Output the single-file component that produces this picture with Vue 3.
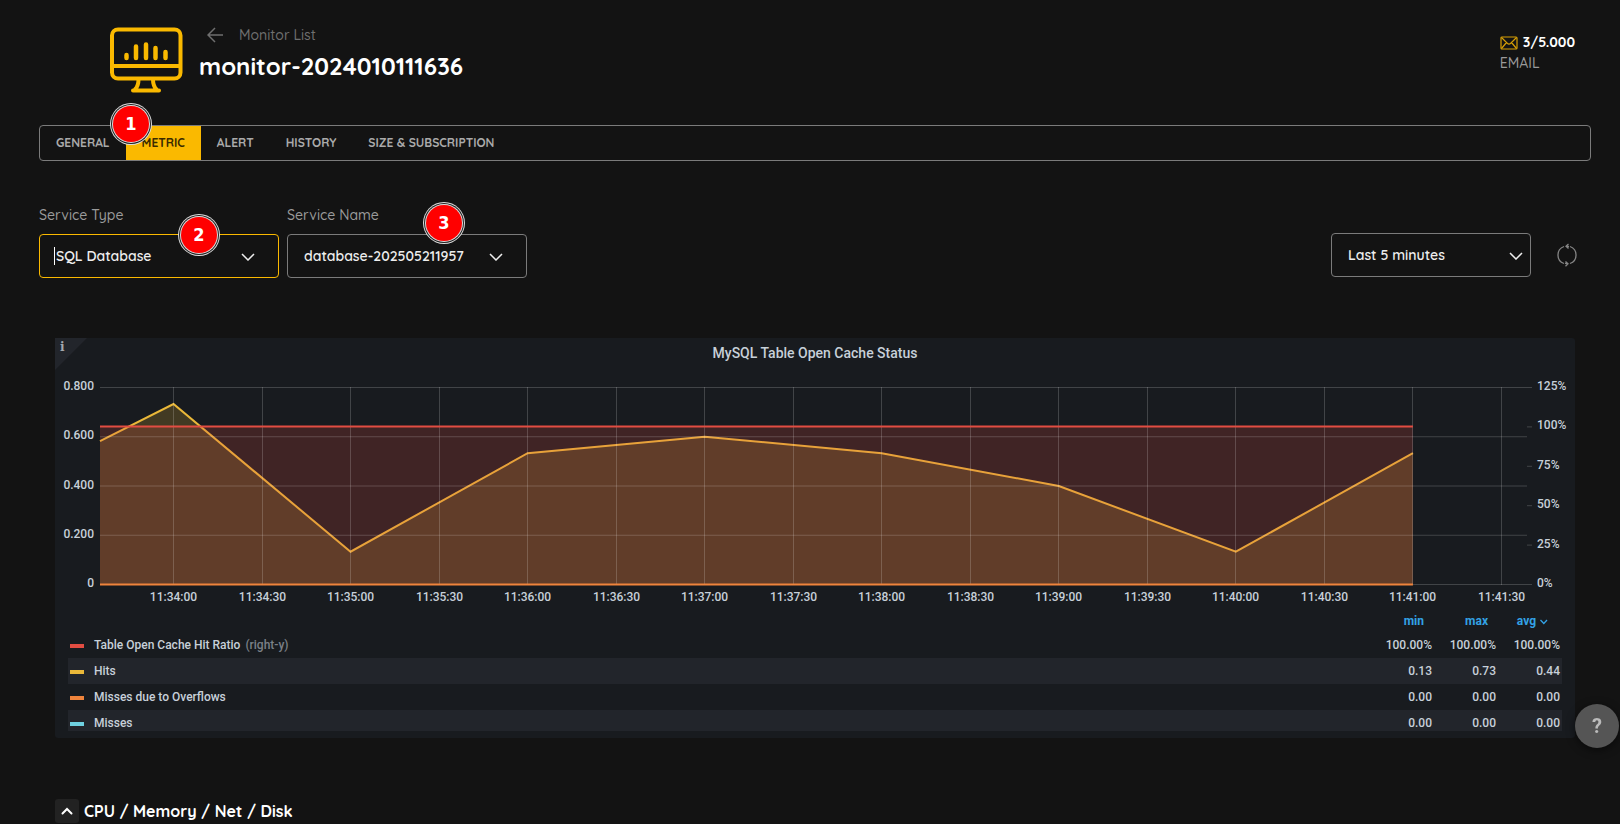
<script setup>
import { ref } from 'vue'

const tabs = ['GENERAL', 'METRIC', 'ALERT', 'HISTORY', 'SIZE & SUBSCRIPTION']
const active = ref('METRIC')

const W = 1432
const H = 198
const plotRight = 1427
const step = 88.53
const firstTick = 73.5

const times = []
for (let i = 0; i < 16; i++) {
  const s = 34 * 60 + i * 30
  const x = Math.floor(firstTick + i * step) + 0.5
  times.push({
    x,
    left: (x / W) * 100 + '%',
    label: `11:${Math.floor(s / 60)}:${s % 60 === 0 ? '00' : '30'}`,
  })
}

const y = (v) => 0.5 + (1 - v / 0.8) * 197
const leftTicks = [0.8, 0.6, 0.4, 0.2, 0]
const leftLabels = ['0.800', '0.600', '0.400', '0.200', '0']
const rightLabels = ['125%', '100%', '75%', '50%', '25%', '0%']
const rightTicks = rightLabels.map((_, i) => 0.5 + (i * 197) / 5)

const minute = (i) => firstTick + i * step * 2
const hits = [
  [0, 0.582],
  [minute(0), 0.733],
  [minute(1), 0.133],
  [minute(2), 0.533],
  [minute(3), 0.6],
  [minute(4), 0.533],
  [minute(5), 0.4],
  [minute(6), 0.133],
  [minute(7), 0.533],
]
const end = minute(7)
const hitsLine = hits.map(([x, v]) => `${x},${y(v)}`).join(' ')
const hitsArea = `0,${y(0)} ${hitsLine} ${end},${y(0)}`
const ratioY = 197 / 5

const series = [
  { name: 'Table Open Cache Hit Ratio', axis: '(right-y)', color: 'red', min: '100.00%', max: '100.00%', avg: '100.00%' },
  { name: 'Hits', color: 'yellow', min: '0.13', max: '0.73', avg: '0.44' },
  { name: 'Misses due to Overflows', color: 'orange', min: '0.00', max: '0.00', avg: '0.00' },
  { name: 'Misses', color: 'cyan', min: '0.00', max: '0.00', avg: '0.00' },
]
</script>

<template>
  <div class="page">
    <header class="header">
      <svg class="logo" width="73" height="68" viewBox="0 0 73 68" fill="none" stroke="#fab900" stroke-width="4" stroke-linecap="round" stroke-linejoin="round" aria-hidden="true">
        <rect x="2" y="2.5" width="68.5" height="49" rx="6" />
        <path d="M3 39H70" />
        <path d="M28.500 52.500Q28.500 59 25 62.500M43 52.500Q43 59 46.500 62.500M23 63.500H49" />
        <path d="M16.500 28V31M26 19.500V31M36 17.500V31M45.500 21V31M55.500 25V31" stroke-width="4.5" />
      </svg>
      <div class="heading">
        <a class="back" href="#">
          <svg width="17" height="16" viewBox="0 0 17 16" fill="none" stroke="currentColor" stroke-width="1.500" aria-hidden="true"><path d="M16 8H1.500M8 1L1 8L8 15" /></svg>
          Monitor List
        </a>
        <h1>monitor-2024010111636</h1>
      </div>
      <div class="quota">
        <div class="count">
          <svg width="18" height="14" viewBox="0 0 18 14" fill="none" stroke="#d79f06" stroke-width="1.200" aria-hidden="true"><rect x="1" y="1" width="16" height="12" rx="1" /><path d="M1.500 1.500L7.500 7.500Q9 8.600 10.500 7.500L16.500 1.500M1.500 12.500L6.500 6.500M16.500 12.500L11.500 6.500" /></svg>
          3/5.000
        </div>
        <div class="kind">EMAIL</div>
      </div>
    </header>

    <nav class="tabs">
      <button v-for="t in tabs" :key="t" type="button" :class="{ active: t === active }" @click="active = t">{{ t }}</button>
      <span class="badge one">1</span>
    </nav>

    <section class="filters">
      <div class="field">
        <label for="type">Service Type</label>
        <div class="control focused">
          <select id="type"><option>SQL Database</option></select>
          <span class="caret"></span>
          <svg class="chev" width="14" height="8" viewBox="0 0 14 8"><path d="M1 1L7 7L13 1" /></svg>
        </div>
        <span class="badge two">2</span>
      </div>
      <div class="field">
        <label for="name">Service Name</label>
        <div class="control">
          <select id="name"><option>database-202505211957</option></select>
          <svg class="chev" width="14" height="8" viewBox="0 0 14 8"><path d="M1 1L7 7L13 1" /></svg>
        </div>
        <span class="badge three">3</span>
      </div>
      <div class="range">
        <div class="control">
          <select id="range" aria-label="Time range"><option>Last 5 minutes</option></select>
          <svg class="chev" width="14" height="8" viewBox="0 0 14 8"><path d="M1 1L7 7L13 1" /></svg>
        </div>
        <button class="refresh" type="button" aria-label="Refresh">
          <svg width="20" height="24" viewBox="0 0 20 24" fill="none" stroke="#858585" stroke-width="1.300"><path d="M7 3.500A9 9 0 0 0 7 20.500M8 20.300L11 20.800M13 20.500A9 9 0 0 0 13 3.500M12 3.500L9 3.200M11.500 1L9 3.200L11.500 5.500M8.500 18.500L11 20.800L8.500 23.200" /></svg>
        </button>
      </div>
    </section>

    <section class="panel">
      <span class="corner"></span><span class="info">i</span>
      <h2>MySQL Table Open Cache Status</h2>
      <div class="chart">
        <div class="axis left"><span v-for="l in leftLabels" :key="l">{{ l }}</span></div>
        <svg class="plot" :viewBox="`0 0 ${W} ${H}`" preserveAspectRatio="none" aria-hidden="true">
          <polygon :points="hitsArea" fill="#eab839" fill-opacity=".2" />
          <polyline :points="hitsLine" class="line" stroke="#eab839" />
          <rect x="0" :y="ratioY" :width="end" :height="y(0) - ratioY" fill="#e24d42" fill-opacity=".2" />
          <g class="grid">
            <line v-for="v in leftTicks" :key="v" x1="0" :x2="plotRight" :y1="y(v)" :y2="y(v)" />
            <line v-for="t in times" :key="t.x" :x1="t.x" :x2="t.x" y1="0" :y2="H" />
            <line v-for="r in rightTicks" :key="r" :x1="plotRight" :x2="W" :y1="r" :y2="r" />
          </g>
          <line x1="0" :x2="end" :y1="ratioY" :y2="ratioY" class="line" stroke="#e24d42" />
          <line x1="0" :x2="end" :y1="y(0)" :y2="y(0)" class="line" stroke="#ef843c" />
        </svg>
        <div class="axis right"><span v-for="l in rightLabels" :key="l">{{ l }}</span></div>
        <div class="times"><span v-for="t in times" :key="t.label" :style="{ left: t.left }">{{ t.label }}</span></div>
      </div>
      <table class="legend">
        <thead>
          <tr>
            <th></th>
            <th>min</th>
            <th>max</th>
            <th>avg <svg width="9" height="6" viewBox="0 0 9 6" fill="none" stroke="#33a2e5" stroke-width="1.300"><path d="M1.500 1L4.800 4.500L8 1" /></svg></th>
          </tr>
        </thead>
        <tbody>
          <tr v-for="s in series" :key="s.name">
            <td><i :class="['swatch', s.color]"></i>{{ s.name }}<span v-if="s.axis" class="note">{{ s.axis }}</span></td>
            <td>{{ s.min }}</td>
            <td>{{ s.max }}</td>
            <td>{{ s.avg }}</td>
          </tr>
        </tbody>
      </table>
    </section>

    <section class="group">
      <button type="button" aria-label="Collapse section">
        <svg width="12" height="8" viewBox="0 0 12 8" fill="none" stroke="#fff" stroke-width="2" stroke-linecap="round"><path d="M1.500 6.500L6 2L10.500 6.500" /></svg>
      </button>
      <h3>CPU / Memory / Net / Disk</h3>
    </section>

    <button class="help" type="button" aria-label="Help">?</button>
  </div>
</template>

<style>
body {
  background: #131313;
}
</style>

<style scoped>
.page {
  box-sizing: border-box;
  min-height: 100vh;
  padding: 27px 29px 0 39px;
  background: #131313;
  color: #fff;
  font-family: Quicksand, Lato, sans-serif;
  font-size: 14px;
  font-weight: 500;
}
.page * {
  box-sizing: border-box;
}
button,
select {
  font: inherit;
  color: inherit;
  margin: 0;
  padding: 0;
  border: 0;
  background: none;
  cursor: pointer;
}
svg {
  flex: none;
}
h1,
h2,
h3 {
  margin: 0;
}
.header {
  display: flex;
  height: 98px;
  padding: 0 16px 0 71px;
}
.heading {
  padding-left: 16px;
}
.back {
  display: flex;
  align-items: center;
  gap: 15px;
  height: 16px;
  padding-left: 8px;
  color: #6f6f6f;
  text-decoration: none;
}
h1 {
  margin-top: 8px;
  font-size: 24px;
  line-height: 30px;
  font-weight: 700;
}
.quota {
  margin: 5px 0 0 auto;
  line-height: 21px;
}
.count {
  display: flex;
  align-items: center;
  gap: 5px;
  font-weight: 700;
}
.kind {
  color: #9a9a9a;
}
.tabs {
  position: relative;
  display: flex;
  height: 36px;
  border: 1px solid #7b7b7b;
  border-radius: 4px;
}
.tabs button {
  padding: 0 16px 2px;
  font-size: 12px;
  font-weight: 700;
  color: #aaa;
}
.tabs .active {
  background: #fab900;
  color: #3a2b00;
}
.badge {
  position: absolute;
  width: 36px;
  height: 36px;
  border-radius: 50%;
  background: #f00;
  box-shadow: 0 0 0 1px #ddd, 0 0 0 2px #222, 0 0 0 3px #ddd;
  font: 700 18px/36px "DejaVu Sans Condensed", "DejaVu Sans", sans-serif;
  text-align: center;
}
.one {
  left: 73px;
  top: -20px;
}
.two {
  left: 142px;
  top: 11px;
}
.three {
  left: 139px;
  top: -1px;
}
.filters {
  display: flex;
  align-items: flex-end;
  gap: 8px;
  margin-top: 45px;
}
.field {
  position: relative;
  width: 240px;
}
.field label {
  display: block;
  margin-bottom: 10px;
  line-height: 18px;
  color: #9a9a9a;
}
.control {
  position: relative;
}
.control select {
  display: block;
  width: 100%;
  height: 44px;
  padding: 0 16px;
  appearance: none;
  outline: 0;
  border: 1px solid #7b7b7b;
  border-radius: 4px;
  color: #eee;
  font-weight: 600;
}
.control option {
  background: #131313;
}
.control.focused select {
  border-color: #fab900;
}
.caret {
  position: absolute;
  left: 15px;
  top: 13px;
  width: 1px;
  height: 18px;
  background: #fff;
}
.chev {
  position: absolute;
  right: 24px;
  top: 19px;
  fill: none;
  stroke: #eee;
  stroke-width: 1.5;
  pointer-events: none;
}
.range {
  display: flex;
  align-items: center;
  gap: 26px;
  margin: 0 14px 1px auto;
}
.range .control {
  width: 200px;
}
.range .chev {
  right: 8px;
}
.refresh {
  display: flex;
}
.panel {
  position: relative;
  margin: 60px 16px 0;
  padding-bottom: 7px;
  border-radius: 3px;
  background: #181b1f;
  color: #c7d0d9;
  font: 500 12px/16px Roboto, sans-serif;
}
.corner {
  position: absolute;
  left: 0;
  top: 0;
  width: 32px;
  height: 32px;
  background: #22252b;
  clip-path: polygon(0 0, 100% 0, 0 100%);
}
.info {
  position: absolute;
  left: 5px;
  top: 1px;
  color: #a5a9b0;
  font: 700 12px/16px "DejaVu Serif", serif;
}
h2 {
  font-size: 14px;
  font-weight: 500;
  line-height: 30px;
  text-align: center;
}
.chart {
  display: grid;
  grid-template-columns: 45px 1fr 43px;
  margin: 10px 0 8px;
}
.axis {
  display: flex;
  flex-direction: column;
  justify-content: space-between;
}
.left {
  padding-right: 6px;
  text-align: right;
}
.right {
  padding-left: 5px;
}
.plot {
  display: block;
  width: 100%;
  height: 198px;
  margin: 9px 0 6px;
  overflow: visible;
}
.grid line {
  stroke: #fff;
  stroke-opacity: 0.18;
}
.line {
  fill: none;
  stroke-width: 2;
}
.times {
  position: relative;
  grid-column: 2;
  height: 12px;
}
.times span {
  position: absolute;
  line-height: 12px;
  transform: translateX(-50%);
}
.legend {
  width: calc(100% - 26px);
  margin: 0 13px;
  border-collapse: collapse;
}
.legend th {
  width: 64px;
  height: 21px;
  padding: 2px 8px 3px 0;
  color: #33a2e5;
  font-weight: 700;
  text-align: right;
}
.legend th:first-child {
  width: auto;
}
.legend th:last-child {
  width: 66px;
  padding-right: 14px;
}
.legend td {
  padding: 5px 0;
  text-align: right;
}
.legend td:first-child {
  text-align: left;
}
.legend td:last-child {
  padding-right: 2px;
}
.legend tr:last-child td {
  padding-bottom: 0;
}
.legend tbody tr:nth-child(even) {
  background: #22252b;
}
.swatch {
  display: inline-block;
  width: 14px;
  height: 4px;
  margin: 0 10px 1px 2px;
}
.red {
  background: #e24d42;
}
.yellow {
  background: #eab839;
}
.orange {
  background: #ef843c;
}
.cyan {
  background: #6ed0e0;
}
.note {
  margin-left: 5px;
  color: #7b8087;
}
.group {
  display: flex;
  align-items: center;
  gap: 5px;
  margin: 61px 0 0 16px;
}
.group button {
  display: flex;
  align-items: center;
  justify-content: center;
  width: 24px;
  height: 24px;
  border-radius: 3px;
  background: #222;
}
h3 {
  padding-top: 1px;
  font-size: 16px;
  line-height: 23px;
  font-weight: 700;
}
.help {
  position: fixed;
  right: 1px;
  bottom: 76px;
  width: 44px;
  height: 44px;
  border-radius: 50%;
  background: #555;
  color: #bbb;
  box-shadow: 0 2px 8px #0008;
  font: 700 20px/44px Roboto, sans-serif;
}
</style>
